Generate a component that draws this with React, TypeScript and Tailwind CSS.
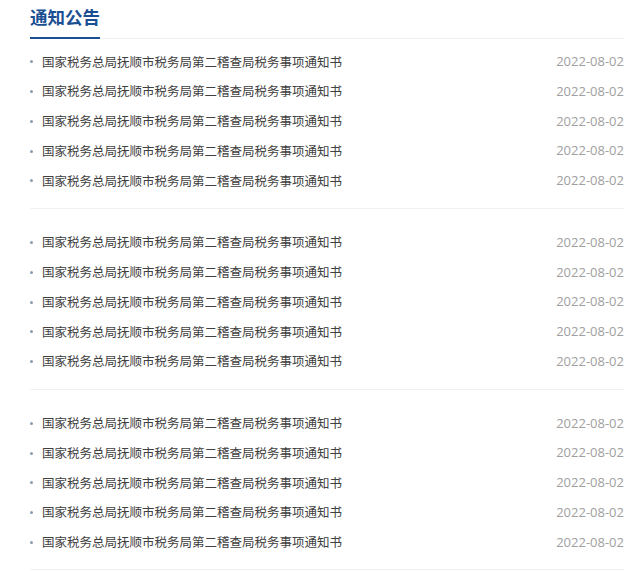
const items = Array.from({ length: 5 }, () => ({
  title: '国家税务总局抚顺市税务局第二稽查局税务事项通知书',
  date: '2022-08-02',
}));

const groups = [items, items, items];

function NoticeRow({ title, date }: { title: string; date: string }) {
  return (
    <li className="flex h-[29.75px] items-center justify-between">
      <div className="flex items-center">
        <span className="mr-[9px] h-[3px] w-[3px] rounded-full bg-[#8a9bb0]" />
        <a className="text-[12.5px] text-[#404040] [font-family:'Noto_Sans_CJK_SC',sans-serif]">{title}</a>
      </div>
      <span className="text-[13px] text-[#a0a0a0] [font-family:'Open_Sans',sans-serif]">{date}</span>
    </li>
  );
}

export default function App() {
  return (
    <div className="h-[571px] w-[640px] bg-white pl-[30px] pr-4">
      <div className="flex border-b border-[#f0f0f0]">
        <h2 className="-mb-px border-b-2 border-[#1b4f93] pt-1 pb-[7px] text-[17.5px] leading-[26px] font-bold text-[#1b4f93] [font-family:'Noto_Sans_CJK_SC',sans-serif]">
          通知公告
        </h2>
      </div>
      {groups.map((group, gi) => (
        <ul key={gi} className={`border-b border-[#f0f0f0] pb-3 ${gi === 0 ? 'pt-2' : 'pt-[19px]'}`}>
          {group.map((item, i) => (
            <NoticeRow key={i} title={item.title} date={item.date} />
          ))}
        </ul>
      ))}
    </div>
  );
}
